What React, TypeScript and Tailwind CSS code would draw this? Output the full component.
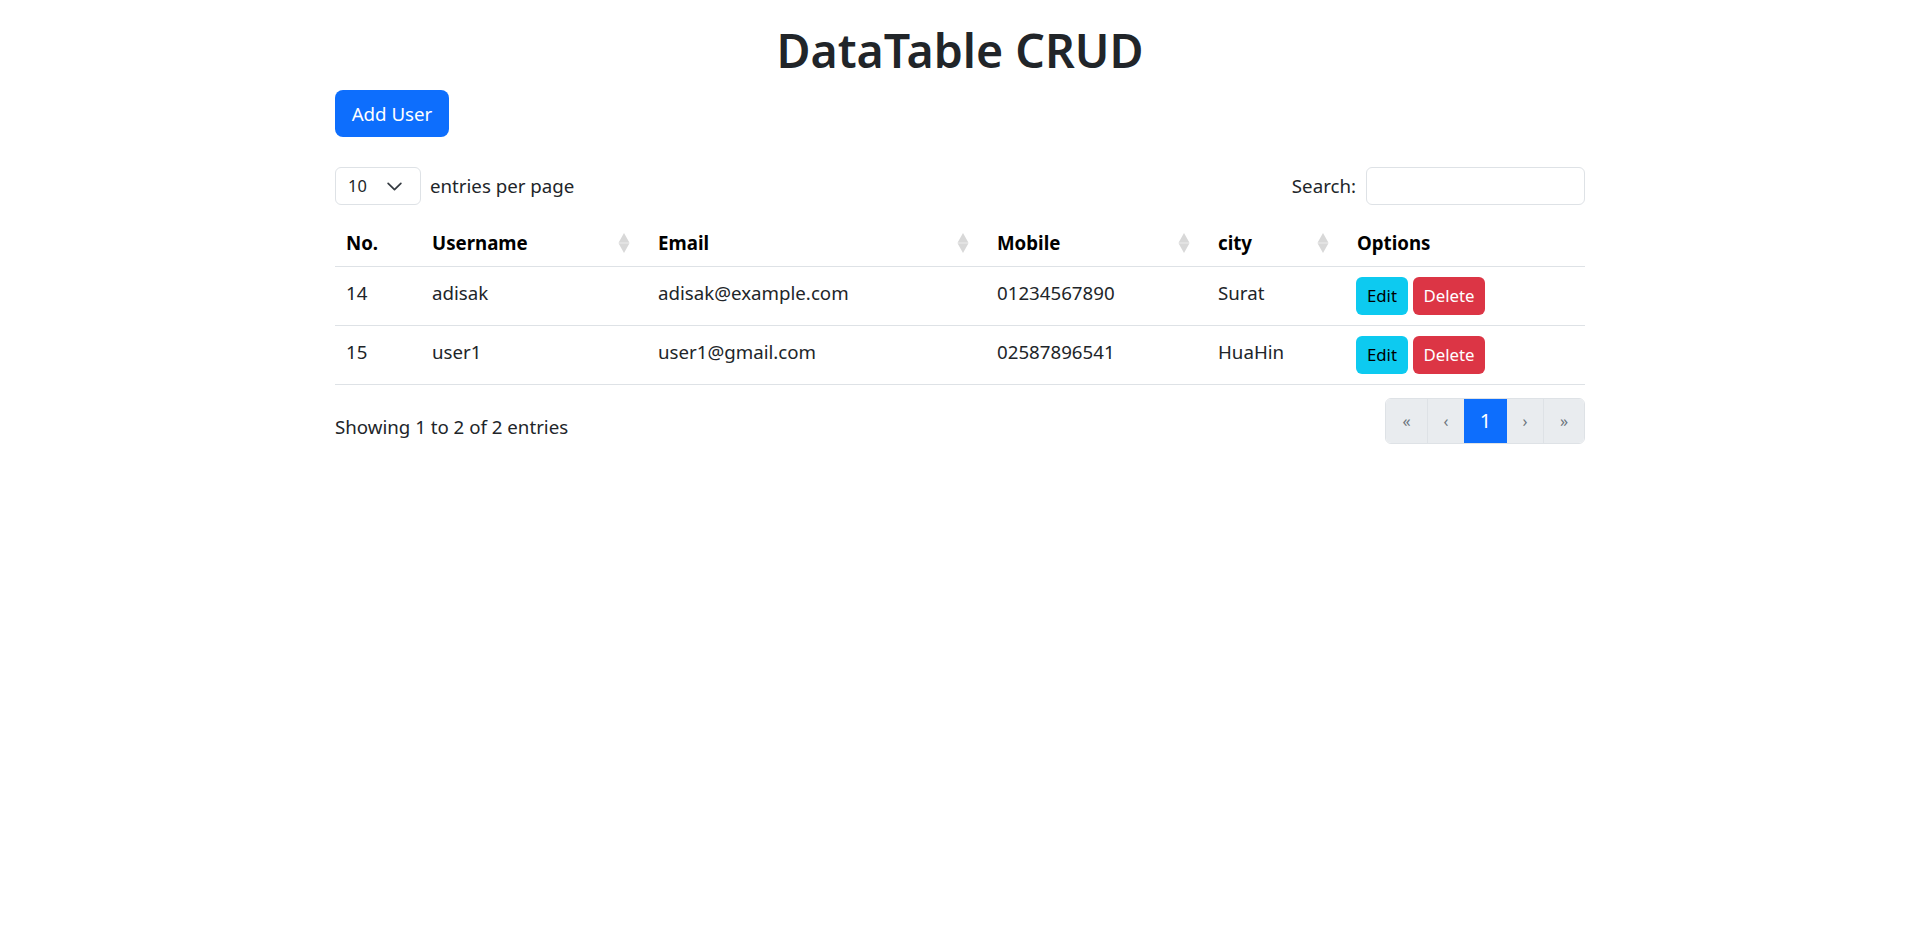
import React from "react";

const users = [
  { id: 14, username: "adisak", email: "adisak@example.com", mobile: "01234567890", city: "Surat" },
  { id: 15, username: "user1", email: "user1@gmail.com", mobile: "02587896541", city: "HuaHin" },
];

function SortIcon() {
  return (
    <svg width="12" height="20" viewBox="0 0 12 20" className="shrink-0">
      <path d="M6 0 L11.5 9.7 L0.5 9.7 Z" fill="#d8d8d8" />
      <path d="M6 20 L11.5 10.3 L0.5 10.3 Z" fill="#d8d8d8" />
    </svg>
  );
}

const columns = [
  { label: "No.", width: "w-[86px]", sortable: false },
  { label: "Username", width: "w-[226px]", sortable: true },
  { label: "Email", width: "w-[339px]", sortable: true },
  { label: "Mobile", width: "w-[221px]", sortable: true },
  { label: "city", width: "w-[139px]", sortable: true },
  { label: "Options", width: "w-[239px]", sortable: false },
];

export default function App() {
  return (
    <div
      className="min-h-screen bg-white text-[#212529] text-[18.7px] leading-[28px]"
      style={{ fontFamily: '"Noto Sans", "Open Sans", sans-serif' }}
    >
      <div className="w-[1250px] mx-auto">
        <h1 className="text-center text-[46.5px] leading-[60px] font-semibold pt-[20px] mb-[10px]">
          DataTable CRUD
        </h1>

        <button className="h-[47px] w-[114px] rounded-lg bg-[#0d6efd] text-white text-[18.7px]">
          Add User
        </button>

        {/* Top controls */}
        <div className="flex items-center justify-between mt-[30px]">
          <div className="flex items-center gap-[9px]">
            <div className="flex items-center justify-between w-[86px] h-[38px] border border-[#dee2e6] rounded-md pl-3 pr-[17px] text-[16.4px]">
              <span>10</span>
              <svg width="17" height="17" viewBox="0 0 16 16">
                <path d="M2 5l6 6 6-6" fill="none" stroke="#343a40" strokeWidth="1.6" strokeLinecap="round" strokeLinejoin="round" />
              </svg>
            </div>
            <span>entries per page</span>
          </div>
          <div className="flex items-center gap-[10px]">
            <span>Search:</span>
            <input className="w-[219px] h-[38px] border border-[#dee2e6] rounded-md outline-none px-3" />
          </div>
        </div>

        {/* Table */}
        <table className="w-full border-collapse mt-[14px]">
          <thead>
            <tr className="border-b border-[#dee2e6]">
              {columns.map((c) => (
                <th key={c.label} className={`${c.width} text-left font-bold text-black pt-[10px] pb-[9px] pl-[11px] pr-[17px]`}>
                  <div className="flex items-center justify-between">
                    <span>{c.label}</span>
                    {c.sortable && <SortIcon />}
                  </div>
                </th>
              ))}
            </tr>
          </thead>
          <tbody>
            {users.map((u) => (
              <tr key={u.id} className="border-b border-[#dee2e6]">
                <td className="pt-[7px] pb-[13px] px-[11px]">{u.id}</td>
                <td className="pt-[7px] pb-[13px] px-[11px]">{u.username}</td>
                <td className="pt-[7px] pb-[13px] px-[11px]">{u.email}</td>
                <td className="pt-[7px] pb-[13px] px-[11px]">{u.mobile}</td>
                <td className="pt-[7px] pb-[13px] px-[11px]">{u.city}</td>
                <td className="py-[10px] px-[10px]">
                  <div className="flex items-center gap-[5px] text-[16.8px]">
                    <button className="h-[38px] w-[52px] rounded-md bg-[#0dcaf0] text-black">Edit</button>
                    <button className="h-[38px] w-[72px] rounded-md bg-[#dc3545] text-white">Delete</button>
                  </div>
                </td>
              </tr>
            ))}
          </tbody>
        </table>

        {/* Footer */}
        <div className="flex items-center justify-between mt-[13px]">
          <span className="pt-[12px]">Showing 1 to 2 of 2 entries</span>
          <div className="flex h-[46px] rounded-md border border-[#dee2e6] overflow-hidden text-[#6c757d] text-[16px]">
            <span className="w-[41px] flex items-center justify-center bg-[#e9ecef]">«</span>
            <span className="w-[37px] flex items-center justify-center bg-[#e9ecef] border-l border-[#dee2e6]">‹</span>
            <span className="w-[43px] flex items-center justify-center bg-[#0d6efd] text-white text-[20px]">1</span>
            <span className="w-[36px] flex items-center justify-center bg-[#e9ecef]">›</span>
            <span className="w-[41px] flex items-center justify-center bg-[#e9ecef] border-l border-[#dee2e6]">»</span>
          </div>
        </div>
      </div>
    </div>
  );
}
